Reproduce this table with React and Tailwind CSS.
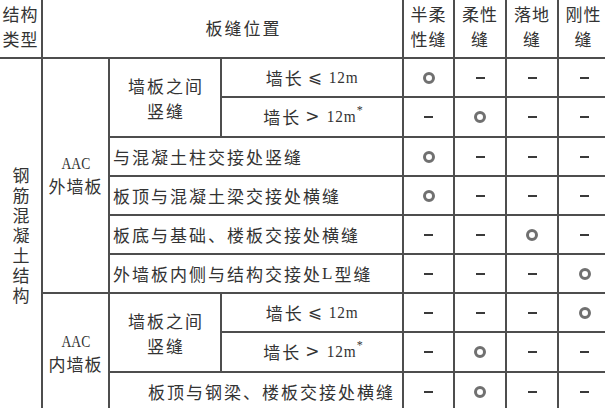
import React from "react";

const CJK = { fontFamily: '"Noto Sans CJK SC", "Noto Sans", sans-serif' };
const SERIF = { fontFamily: '"Liberation Serif", serif' };

function Ring() {
  return <div className="w-[12px] h-[12px] rounded-full border-[3px] border-[#707070]" />;
}
function Dash() {
  return <div className="w-[9px] h-[2px] bg-[#3a3a3a]" />;
}

const rowStarts = [
  "row-start-2",
  "row-start-3",
  "row-start-4",
  "row-start-5",
  "row-start-6",
  "row-start-7",
  "row-start-8",
  "row-start-9",
  "row-start-10",
];
const colStarts = ["col-start-5", "col-start-6", "col-start-7", "col-start-8"];

const values = [
  [1, 0, 0, 0],
  [0, 1, 0, 0],
  [1, 0, 0, 0],
  [1, 0, 0, 0],
  [0, 0, 1, 0],
  [0, 0, 0, 1],
  [0, 0, 0, 1],
  [0, 1, 0, 0],
  [0, 1, 0, 0],
];

const cell = "bg-white flex items-center";

function Len({ gt }) {
  return (
    <div className={cell + " justify-center pl-[2px]"}>
      <span className="tracking-[2px]">墙长</span>
      <span className="ml-[4px] mr-[5px]" style={{ fontFamily: '"DejaVu Sans", sans-serif' }}>
        {gt ? ">" : "⩽"}
      </span>
      <span className="inline-block text-[17px] tracking-[1px] scale-x-[0.9]" style={SERIF}>
        12m
      </span>
      {gt ? (
        <span className="relative -top-[7px] text-[12px] -ml-[1px]" style={SERIF}>
          *
        </span>
      ) : null}
    </div>
  );
}

function AAC() {
  return (
    <span className="inline-block text-[16px] tracking-[0px] scale-x-[0.85] leading-[20px]" style={SERIF}>
      AAC
    </span>
  );
}

const head = " row-start-1 justify-center text-center leading-[25px] tracking-[1px] pb-[5px]";

export default function App() {
  return (
    <div className="w-[605px] h-[408px] overflow-hidden bg-white text-[#333333] text-[17px]" style={CJK}>
      <div
        className="grid w-[610px] gap-[2px] bg-[#4e4e4e]"
        style={{
          gridTemplateColumns: "41px 65px 110px 180px 49px 50px 50px 51px",
          gridTemplateRows: "57px 37px 38px 37px 37px 37px 37px 37px 38px 38px",
        }}
      >
        {/* header */}
        <div className={cell + " col-start-1" + head}>
          结构<br />类型
        </div>
        <div className={cell + " col-start-2 col-span-3 row-start-1 justify-center pl-[42px] tracking-[2px] pb-[2px]"}>
          板缝位置
        </div>
        <div className={cell + " col-start-5" + head}>
          半柔<br />性缝
        </div>
        <div className={cell + " col-start-6" + head}>
          柔性<br />缝
        </div>
        <div className={cell + " col-start-7" + head}>
          落地<br />缝
        </div>
        <div className={cell + " col-start-8 pr-[2px]" + head}>
          刚性<br />缝
        </div>

        {/* col 1 */}
        <div className={cell + " col-start-1 row-start-2 row-span-9 justify-center pt-[4px]"}>
          <span className="[writing-mode:vertical-rl] tracking-[3px] leading-[20px]">钢筋混凝土结构</span>
        </div>

        {/* outer wall */}
        <div className={cell + " col-start-2 row-start-2 row-span-6 flex-col justify-center text-center leading-[24px] tracking-[1px]"}>
          <AAC />
          <span>外墙板</span>
        </div>
        <div className={cell + " col-start-3 row-start-2 row-span-2 justify-center text-center leading-[25px] tracking-[2px] pl-[2px]"}>
          墙板之间<br />竖缝
        </div>
        <div className="col-start-4 row-start-2 grid">
          <Len />
        </div>
        <div className="col-start-4 row-start-3 grid">
          <Len gt />
        </div>
        <div className={cell + " col-start-3 col-span-2 row-start-4 pl-[3px] tracking-[2px]"}>
          与混凝土柱交接处竖缝
        </div>
        <div className={cell + " col-start-3 col-span-2 row-start-5 pl-[3px] tracking-[2px]"}>
          板顶与混凝土梁交接处横缝
        </div>
        <div className={cell + " col-start-3 col-span-2 row-start-6 pl-[3px] tracking-[2px]"}>
          板底与基础、楼板交接处横缝
        </div>
        <div className={cell + " col-start-3 col-span-2 row-start-7 pl-[3px] tracking-[2px]"}>
          外墙板内侧与结构交接处
          <span style={SERIF}>L</span>型缝
        </div>

        {/* inner wall */}
        <div className={cell + " col-start-2 row-start-8 row-span-3 flex-col justify-center text-center leading-[24px] tracking-[1px] pt-[2px]"}>
          <AAC />
          <span>内墙板</span>
        </div>
        <div className={cell + " col-start-3 row-start-8 row-span-2 justify-center text-center leading-[25px] tracking-[2px] pl-[2px]"}>
          墙板之间<br />竖缝
        </div>
        <div className="col-start-4 row-start-8 grid">
          <Len />
        </div>
        <div className="col-start-4 row-start-9 grid">
          <Len gt />
        </div>
        <div className={cell + " col-start-3 col-span-2 row-start-10 pl-[38px] tracking-[2px]"}>
          板顶与钢梁、楼板交接处横缝
        </div>

        {/* values */}
        {values.map((row, r) =>
          row.map((v, c) => (
            <div key={r + "-" + c} className={cell + " justify-center " + rowStarts[r] + " " + colStarts[c]}>
              {v ? <Ring /> : <Dash />}
            </div>
          ))
        )}
      </div>
    </div>
  );
}
